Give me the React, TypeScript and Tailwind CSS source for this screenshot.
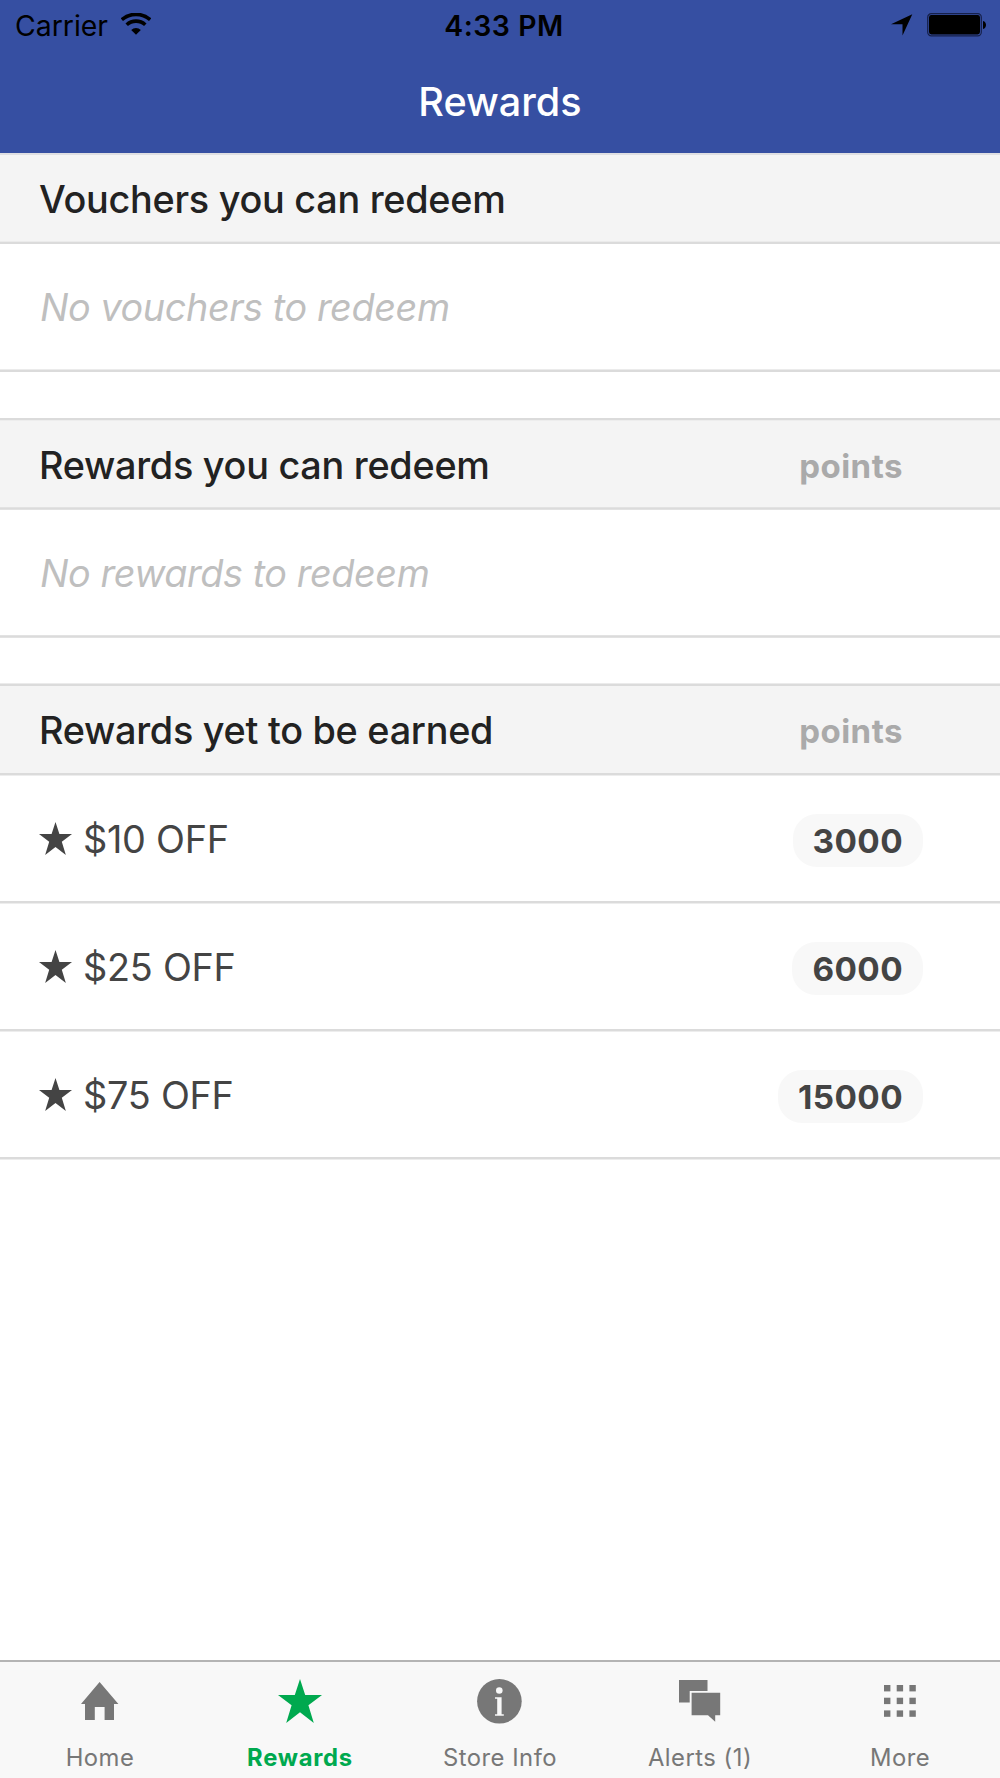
import { ReactNode } from "react"
import clsx from "clsx"

interface Reward {
  name: string;
  points: number;
}

interface Tab {
  label: string;
  icon: ReactNode;
  active?: boolean;
}

const rewards: Reward[] = [
  { name: "$10 OFF", points: 3000 },
  { name: "$25 OFF", points: 6000 },
  { name: "$75 OFF", points: 15000 },
]

const StarIcon = ({ className }: { className?: string }) => (
  <svg viewBox="0 0 44 44" fill="currentColor" className={className}>
    <path d="M22 0 L27.2 16 H44 L30.4 26.3 L35.8 44 L22 33.2 L8.2 44 L13.6 26.3 L0 16 H16.8 Z" />
  </svg>
)

const WifiIcon = () => (
  <svg width="30" height="22" viewBox="0 0 30 22" fill="none" stroke="black">
    <path d="M0.8 6.7 A21.5 21.5 0 0 1 29.2 6.7" strokeWidth="3.6" />
    <path d="M5.7 11.8 A13.6 13.6 0 0 1 24.3 11.8" strokeWidth="3.6" />
    <path d="M15 21.8 L10.2 16.9 A6.8 6.8 0 0 1 19.8 16.9 Z" fill="black" stroke="none" />
  </svg>
)

const BatteryIcon = () => (
  <svg width="60" height="24" viewBox="0 0 60 24">
    <rect x="0.7" y="0.7" width="53.6" height="22.1" rx="3.6" fill="none" stroke="#16204a" strokeWidth="1.2" />
    <rect x="2" y="2" width="51" height="19.5" rx="2.4" fill="black" />
    <path d="M56 8 C60 9 60 15 56 16 Z" fill="black" />
  </svg>
)

const HomeIcon = () => (
  <svg width="38" height="38" viewBox="0 0 38 38" fill="currentColor">
    <path d="M18.6 0 L37.4 22 H33 V38 H23.6 V25 H13.8 V38 H4 V22 H0 Z" />
  </svg>
)

const InfoIcon = () => (
  <svg width="46" height="45" viewBox="0 0 46 45">
    <circle cx="22.4" cy="22.3" r="22.3" fill="currentColor" />
    <circle cx="22.3" cy="11.5" r="3.3" fill="#f8f8f8" />
    <path d="M18 18.3 H24.6 V35.2 H26.8 V36.7 H18 V35.2 H20.2 V19.8 H18 Z" fill="#f8f8f8" />
  </svg>
)

const ChatIcon = () => (
  <svg width="42" height="42" viewBox="0 0 42 42" fill="currentColor">
    <path d="M0 0 H28.5 V11 H10.7 V22.5 H0 Z" />
    <path d="M12.6 12.8 H41.2 V35.2 H36.2 V41.7 L29 35.2 H12.6 Z" />
  </svg>
)

const GridIcon = () => (
  <svg width="32" height="32" viewBox="0 0 32 32" fill="currentColor">
    {[0, 12.7, 25.4].map((y) =>
      [0, 12.7, 25.4].map((x) => <rect key={`${x}-${y}`} x={x} y={y} width="6.4" height="6.4" />)
    )}
  </svg>
)

const tabs: Tab[] = [
  { label: "Home", icon: <HomeIcon /> },
  { label: "Rewards", icon: <StarIcon className="w-11 h-11" />, active: true },
  { label: "Store Info", icon: <InfoIcon /> },
  { label: "Alerts (1)", icon: <ChatIcon /> },
  { label: "More", icon: <GridIcon /> },
]

// Hairline with a softer pixel on one or both sides
const Divider = ({ soft }: { soft: "top" | "bottom" | "both" }) => (
  <div
    className={clsx(
      "h-[3px] bg-[#dbdbdb]",
      soft === "top" && "border-t border-t-[#ebebeb]",
      soft === "bottom" && "border-b border-b-[#ededed]",
      soft === "both" && "border-y border-y-[#e2e2e2]",
    )}
  />
)

const SectionHeader = ({ title, showPoints }: { title: string; showPoints?: boolean }) => (
  <div className="flex h-[86px] items-center justify-between bg-[#f4f4f4] pt-[3px] pr-[97px] pl-[39px]">
    <h2 className="text-[37.8px] leading-none font-medium tracking-[-0.27px] text-[#222222]">{title}</h2>
    {showPoints && (
      <span className="pt-[2px] text-[33px] leading-none font-bold tracking-[0.5px] text-[#aaaaaa]">points</span>
    )}
  </div>
)

const EmptyRow = ({ children }: { children: ReactNode }) => (
  <div className="flex h-[125px] items-center pt-[3px] pl-10 text-[37.8px] leading-none tracking-[-0.42px] text-[#bfbfbf] italic">
    {children}
  </div>
)

const RewardRow = ({ reward }: { reward: Reward }) => (
  <div className="flex h-[125px] items-center justify-between pr-[77px] pl-[39px] text-[#444444]">
    <div className="flex items-center gap-[11px]">
      <StarIcon className="h-[33px] w-[33px]" />
      <span className="pt-0.5 text-[37.8px] leading-none tracking-[-0.25px]">{reward.name}</span>
    </div>
    <span className="mt-[3px] flex h-[53px] items-center rounded-[24px] bg-[#f8f8f8] pt-1 pr-5 pl-5 text-[33.3px] leading-none font-bold tracking-[0.4px]">
      {reward.points}
    </span>
  </div>
)

export default function App() {
  return (
    <div className="flex h-[1778px] w-[1000px] flex-col bg-white font-['Inter',sans-serif]">
      <header className="h-[153px] bg-[#364fa2]">
        <div className="grid h-[51px] grid-cols-3 items-center text-[28.4px] leading-none text-black">
          <div className="flex items-center gap-[13px] pl-[15px]">
            <span className="pt-px">Carrier</span>
            <div className="-mt-[3px]">
              <WifiIcon />
            </div>
          </div>
          <span className="pt-px pl-[8px] text-center font-semibold tracking-[0.55px]">4:33 PM</span>
          <div className="-mt-[2px] flex items-center justify-end gap-3.5 pr-[13px]">
            <svg width="22" height="22" viewBox="0 0 22 22">
              <path d="M21.3 0.3 L11.5 21.5 V10.2 L0 10.2 Z" fill="black" />
            </svg>
            <BatteryIcon />
          </div>
        </div>
        <h1 className="pt-8 text-center text-[39.6px] leading-none font-medium text-white">Rewards</h1>
      </header>

      <main className="flex-1">
        <div className="h-0.5 bg-[#dfdfe2]" />
        <SectionHeader title="Vouchers you can redeem" />
        <Divider soft="top" />
        <EmptyRow>No vouchers to redeem</EmptyRow>
        <Divider soft="top" />

        <div className="h-[46px]" />
        <Divider soft="bottom" />
        <SectionHeader title="Rewards you can redeem" showPoints />
        <Divider soft="both" />
        <EmptyRow>No rewards to redeem</EmptyRow>
        <Divider soft="both" />

        <div className="h-[45px]" />
        <Divider soft="top" />
        <SectionHeader title="Rewards yet to be earned" showPoints />
        <div className="h-px bg-[#f4f4f4]" />
        <Divider soft="bottom" />
        {rewards.map((reward) => (
          <div key={reward.name}>
            <RewardRow reward={reward} />
            <Divider soft="bottom" />
          </div>
        ))}
      </main>

      <nav className="grid h-[118px] grid-cols-5 border-t-2 border-t-[#b4b4b4] bg-[#f8f8f8]">
        {tabs.map((tab) => (
          <div
            key={tab.label}
            className={clsx("flex flex-col items-center", tab.active ? "text-[#00a94f]" : "text-[#777777]")}
          >
            <div className="flex h-[78px] items-center">{tab.icon}</div>
            <span
              className={clsx(
                "pt-[6px] text-[23.8px] leading-none",
                tab.active ? "font-bold tracking-[0.75px]" : "tracking-[0.5px]",
              )}
            >
              {tab.label}
            </span>
          </div>
        ))}
      </nav>
    </div>
  )
}
